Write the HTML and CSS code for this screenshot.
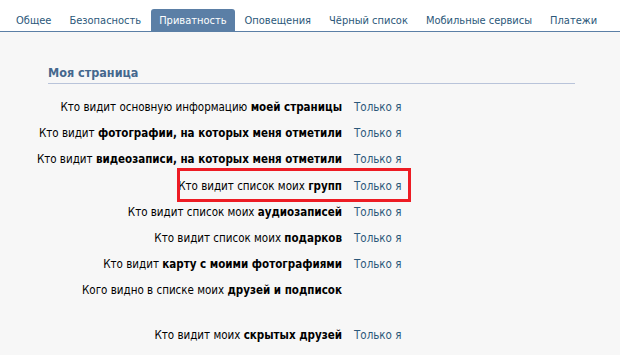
FILE: index.html
```html
<!DOCTYPE html>
<html>
<head>
    <title>Настройки</title>
    <link rel="stylesheet" href="styles.css">
</head>
<body>
    <div class="tabs">
        <a class="tab">Общее</a>
        <a class="tab">Безопасность</a>
        <a class="tab active">Приватность</a>
        <a class="tab">Оповещения</a>
        <a class="tab">Чёрный список</a>
        <a class="tab">Мобильные сервисы</a>
        <a class="tab">Платежи</a>
    </div>

    <div class="content">
        <h2 class="section-title">Моя страница</h2>

        <div class="rows">
            <div class="row">
                <div class="label">Кто видит основную информацию&nbsp;<b>моей страницы</b></div>
                <div class="value">Только я</div>
            </div>
            <div class="row">
                <div class="label">Кто видит&nbsp;<b>фотографии, на которых меня отметили</b></div>
                <div class="value">Только я</div>
            </div>
            <div class="row">
                <div class="label">Кто видит&nbsp;<b>видеозаписи, на которых меня отметили</b></div>
                <div class="value">Только я</div>
            </div>
            <div class="row highlighted">
                <div class="label">Кто видит список моих&nbsp;<b>групп</b></div>
                <div class="value">Только я</div>
                <div class="mark"></div>
            </div>
            <div class="row">
                <div class="label">Кто видит список моих&nbsp;<b>аудиозаписей</b></div>
                <div class="value">Только я</div>
            </div>
            <div class="row">
                <div class="label">Кто видит список моих&nbsp;<b>подарков</b></div>
                <div class="value">Только я</div>
            </div>
            <div class="row">
                <div class="label">Кто видит&nbsp;<b>карту с моими фотографиями</b></div>
                <div class="value">Только я</div>
            </div>
            <div class="row">
                <div class="label">Кого видно в списке моих&nbsp;<b>друзей и подписок</b></div>
                <div class="value"></div>
            </div>
            <div class="row spaced">
                <div class="label">Кто видит моих&nbsp;<b>скрытых друзей</b></div>
                <div class="value">Только я</div>
            </div>
        </div>
    </div>
</body>
</html>
```

FILE: styles.css
```css
body {
    margin: 0;
    background-color: #f7f7f7;
    font-family: "DejaVu Sans Condensed", "DejaVu Sans", sans-serif;
    font-size: 11.5px;
    color: #000;
}
.tabs {
    display: flex;
    gap: 2px;
    padding: 9px 0 0 8px;
    background-color: #fff;
    border-bottom: 1px solid #5b7fa6;
    white-space: nowrap;
}
.tab {
    display: block;
    flex-shrink: 0;
    height: 22px;
    line-height: 23px;
    padding: 0 8px;
    color: #2b587a;
    font-size: 11px;
    border-radius: 3px 3px 0 0;
    cursor: pointer;
}
.tab.active {
    background-color: #5b7fa6;
    color: #fff;
}
.content {
    padding: 33px 45px 0 48px;
}
.section-title {
    margin: 0;
    padding-bottom: 3px;
    font-size: 12.5px;
    font-weight: bold;
    color: #45688e;
    border-bottom: 1px solid #b9c4da;
}
.rows {
    margin: 10px 0 0 -48px;
}
.row {
    position: relative;
    display: flex;
    align-items: center;
    height: 26.2px;
    white-space: nowrap;
}
.row.spaced {
    margin-top: 18px;
}
.label {
    flex: 0 0 342px;
    text-align: right;
}
.label b {
    font-weight: bold;
}
.value {
    margin-left: 12px;
    color: #2b587a;
}
.mark {
    position: absolute;
    left: 177px;
    top: 50%;
    margin-top: -18px;
    width: 228px;
    height: 28px;
    border: 3px solid #ed1c24;
}
```
